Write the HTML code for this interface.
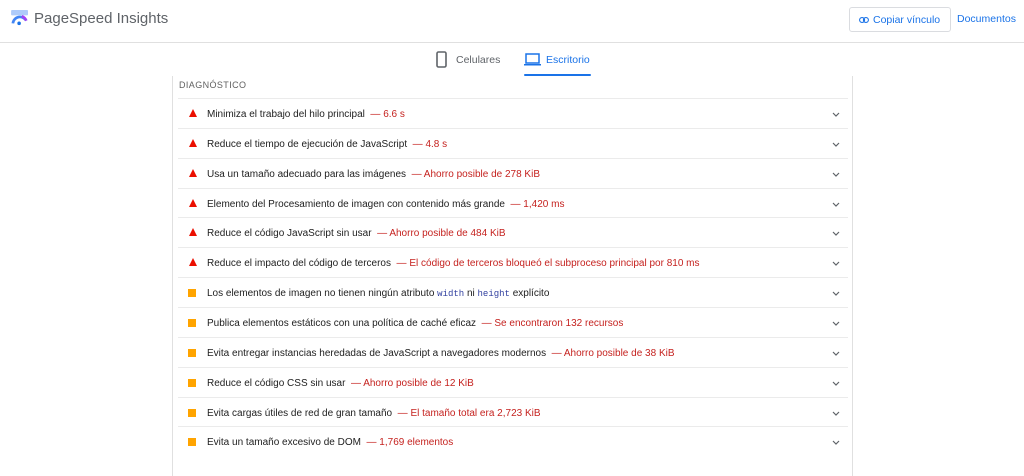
<!DOCTYPE html>
<html><head><meta charset="utf-8"><style>
*{margin:0;padding:0;box-sizing:border-box}
body{width:1024px;height:457px;overflow:hidden;background:#fff;font-family:"Liberation Sans",Arial,sans-serif;position:relative;color:#212121}
.hdr{position:absolute;left:0;top:0;width:1024px;height:43px;border-bottom:1px solid #e0e0e0}
.logo{position:absolute;left:11px;top:10px}
.title{position:absolute;left:34px;top:10px;font-size:15px;color:#5f6368}
.copy{position:absolute;left:849px;top:7px;width:102px;height:25px;border:1px solid #dadce0;border-radius:3px;font-size:10.5px;color:#1a73e8;padding:6px 0 0 23px}
.copy svg{position:absolute;left:9px;top:9px}
.docs{position:absolute;left:957px;top:13px;font-size:10.5px;color:#1a73e8}
.tab{position:absolute;top:54px;font-size:10.5px}
.ul{position:absolute;left:524px;top:74px;width:67px;height:2px;background:#1a73e8;border-radius:2px}
.panel{position:absolute;left:172px;top:76px;width:681px;height:400px;border-left:1px solid #e0e0e0;border-right:1px solid #e0e0e0}
.diag{position:absolute;left:179px;top:80px;font-size:9px;color:#616161;letter-spacing:.4px}
.row{position:absolute;left:178px;width:670px;height:30px;border-top:1px solid #ebebeb;font-size:10px;line-height:30px;padding-top:1px;padding-left:29px;white-space:nowrap}
.row .r{color:#c5221f}
.tri{position:absolute;left:11px;top:10px;width:0;height:0;border-left:4.5px solid transparent;border-right:4.5px solid transparent;border-bottom:8px solid #eb0f00}
.sq{position:absolute;left:10px;top:11px;width:8px;height:8px;background:#ffa400}
.chev{position:absolute;right:8px;top:13px}
code{font-family:"Liberation Mono",monospace;font-size:9px;color:#303f9f}
</style></head><body>
<div class="hdr">
<svg class="logo" width="18" height="16" viewBox="0 0 20 18"><rect x="0" y="0" width="19" height="6" rx="1" fill="#aecbfa"/><path d="M2 15 A8 8 0 0 1 17 12" stroke="#4285f4" stroke-width="3" fill="none"/><path d="M12 7 A8 8 0 0 1 17 12" stroke="#a142f4" stroke-width="3" fill="none"/><circle cx="9" cy="15" r="2" fill="#1a73e8"/></svg>
<div class="title">PageSpeed Insights</div>
<div class="copy"><svg width="10" height="6" viewBox="0 0 10 6"><rect x=".6" y=".6" width="5" height="4.8" rx="2.4" fill="none" stroke="#1a73e8" stroke-width="1.1"/><rect x="4.4" y=".6" width="5" height="4.8" rx="2.4" fill="none" stroke="#1a73e8" stroke-width="1.1"/></svg>Copiar vínculo</div>
<div class="docs">Documentos</div>
</div>
<svg style="position:absolute;left:436px;top:51px" width="11" height="17" viewBox="0 0 11 17"><rect x="1" y="1" width="9" height="15" rx="1.5" fill="none" stroke="#5f6368" stroke-width="1.6"/></svg>
<div class="tab" style="left:456px;color:#5f6368">Celulares</div>
<svg style="position:absolute;left:524px;top:53px" width="17" height="13" viewBox="0 0 17 13"><rect x="2" y="1" width="13" height="9" fill="none" stroke="#1a73e8" stroke-width="1.5"/><rect x="0" y="11" width="17" height="1.5" fill="#1a73e8"/></svg>
<div class="tab" style="left:546px;color:#1a73e8">Escritorio</div>
<div class="ul"></div>
<div class="panel"></div>
<div class="diag">DIAGNÓSTICO</div>
<div id="rows"></div>
<script>
var d=[["t","Minimiza el trabajo del hilo principal","6.6 s"],["t","Reduce el tiempo de ejecución de JavaScript","4.8 s"],["t","Usa un tamaño adecuado para las imágenes","Ahorro posible de 278 KiB"],["t","Elemento del Procesamiento de imagen con contenido más grande","1,420 ms"],["t","Reduce el código JavaScript sin usar","Ahorro posible de 484 KiB"],["t","Reduce el impacto del código de terceros","El código de terceros bloqueó el subproceso principal por 810 ms"],["s","Los elementos de imagen no tienen ningún atributo <code>width</code> ni <code>height</code> explícito",""],["s","Publica elementos estáticos con una política de caché eficaz","Se encontraron 132 recursos"],["s","Evita entregar instancias heredadas de JavaScript a navegadores modernos","Ahorro posible de 38 KiB"],["s","Reduce el código CSS sin usar","Ahorro posible de 12 KiB"],["s","Evita cargas útiles de red de gran tamaño","El tamaño total era 2,723 KiB"],["s","Evita un tamaño excesivo de DOM","1,769 elementos"]];
var h="";d.forEach(function(r,i){var top=98+i*29.85;h+='<div class="row" style="top:'+top+'px"><div class="'+(r[0]=="t"?"tri":"sq")+'"></div>'+r[1]+(r[2]?' <span class="r">&nbsp;— '+r[2]+'</span>':'')+'<svg class="chev" width="8" height="5" viewBox="0 0 8 5"><path d="M1 1l3 3 3-3" stroke="#5f6368" stroke-width="1.2" fill="none"/></svg></div>';});
document.getElementById("rows").innerHTML=h;
</script>
</body></html>
